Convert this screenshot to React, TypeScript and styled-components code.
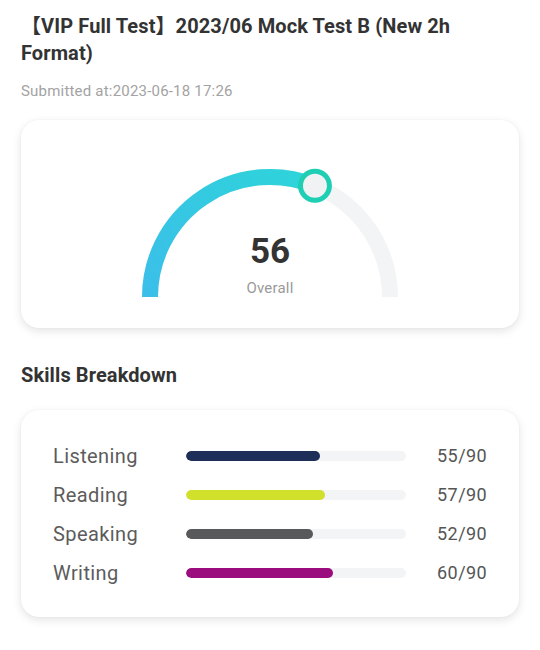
import React from 'react';
import styled, { createGlobalStyle } from 'styled-components';

const GlobalStyle = createGlobalStyle`
  body {
    margin: 0;
    background: #ffffff;
    font-family: Roboto, "Noto Sans", "Noto Sans CJK SC", sans-serif;
  }
`;

const Page = styled.div`
  padding: 13px 21px 24px;
`;

const Title = styled.h1`
  margin: 0;
  font-size: 20px;
  line-height: 27px;
  font-weight: 700;
  letter-spacing: 0.1px;
  color: #333333;
`;

const Submitted = styled.div`
  margin-top: 14px;
  font-size: 15px;
  line-height: 20px;
  letter-spacing: 0.2px;
  color: #a3a3a3;
`;

const Card = styled.div<{ $top: number }>`
  margin-top: ${(p) => p.$top}px;
  background: #ffffff;
  border-radius: 18px;
  box-shadow: 0 3px 10px rgba(0, 0, 0, 0.11), 0 0 2px rgba(0, 0, 0, 0.05);
`;

const GaugeCard = styled(Card)`
  display: flex;
  justify-content: center;
  padding: 35px 0 23px;
`;

const GaugeBox = styled.div`
  position: relative;
  width: 290px;
  height: 150px;
`;

const GaugeText = styled.div`
  position: absolute;
  left: 0;
  right: 0;
  top: 77px;
  display: flex;
  flex-direction: column;
  align-items: center;
`;

const Score = styled.div`
  font-size: 35px;
  line-height: 40px;
  font-weight: 700;
  color: #333333;
`;

const ScoreLabel = styled.div`
  margin-top: 6px;
  font-size: 15px;
  line-height: 20px;
  letter-spacing: 0.2px;
  color: #9a9a9a;
`;

const SectionTitle = styled.h2`
  margin: 34px 0 0;
  font-size: 20px;
  line-height: 27px;
  font-weight: 700;
  letter-spacing: 0.1px;
  color: #333333;
`;

const SkillsCard = styled(Card)`
  padding: 26px 32px 25px;
`;

const Row = styled.div`
  display: grid;
  grid-template-columns: 133px 220px 1fr;
  align-items: center;
  height: 39px;
`;

const SkillName = styled.span`
  font-size: 20px;
  letter-spacing: 0.4px;
  color: #5c5c5c;
`;

const Track = styled.div`
  height: 10px;
  border-radius: 5px;
  background: #f3f4f6;
  overflow: hidden;
`;

const Fill = styled.div<{ $color: string }>`
  height: 100%;
  border-radius: 5px;
  background: ${(p) => p.$color};
`;

const SkillScore = styled.span`
  text-align: right;
  font-size: 18px;
  letter-spacing: 0.4px;
  color: #555555;
`;

const skills = [
  { name: 'Listening', score: 55, color: '#1d2f58' },
  { name: 'Reading', score: 57, color: '#d0e02b' },
  { name: 'Speaking', score: 52, color: '#58595b' },
  { name: 'Writing', score: 60, color: '#9b0c7e' },
];

const Gauge = ({ value, max }: { value: number; max: number }) => {
  const cx = 145;
  const cy = 142;
  const r = 120;
  const angle = Math.PI - (Math.PI * value) / max;
  const x = cx + r * Math.cos(angle);
  const y = cy - r * Math.sin(angle);
  return (
    <GaugeBox>
      <svg width="290" height="150" viewBox="0 0 290 150">
        <defs>
          <linearGradient id="arcGrad" gradientUnits="userSpaceOnUse" x1="25" y1="142" x2="190" y2="22">
            <stop offset="0" stopColor="#3bbfe9" />
            <stop offset="1" stopColor="#2dd5d9" />
          </linearGradient>
        </defs>
        <path
          d={`M ${cx - r} ${cy} A ${r} ${r} 0 0 1 ${cx + r} ${cy}`}
          fill="none"
          stroke="#f3f4f6"
          strokeWidth="16"
        />
        <path
          d={`M ${cx - r} ${cy} A ${r} ${r} 0 0 1 ${x} ${y}`}
          fill="none"
          stroke="url(#arcGrad)"
          strokeWidth="16"
        />
        <circle cx={x} cy={y} r="14.5" fill="#f0f2f4" stroke="#1ecfb4" strokeWidth="5" />
      </svg>
      <GaugeText>
        <Score>{value}</Score>
        <ScoreLabel>Overall</ScoreLabel>
      </GaugeText>
    </GaugeBox>
  );
};

export default function App() {
  return (
    <>
      <GlobalStyle />
      <Page>
        <Title>【VIP Full Test】2023/06 Mock Test B (New 2h Format)</Title>
        <Submitted>Submitted at:2023-06-18 17:26</Submitted>
        <GaugeCard $top={19}>
          <Gauge value={56} max={90} />
        </GaugeCard>
        <SectionTitle>Skills Breakdown</SectionTitle>
        <SkillsCard $top={21}>
          {skills.map((s) => (
            <Row key={s.name}>
              <SkillName>{s.name}</SkillName>
              <Track>
                <Fill $color={s.color} style={{ width: `${(s.score / 90) * 100}%` }} />
              </Track>
              <SkillScore>{s.score}/90</SkillScore>
            </Row>
          ))}
        </SkillsCard>
      </Page>
    </>
  );
}
